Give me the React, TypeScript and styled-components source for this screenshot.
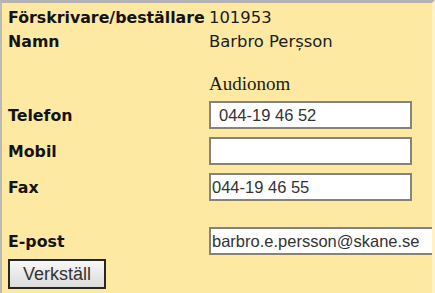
import React from "react";
import styled, { createGlobalStyle } from "styled-components";

const Global = createGlobalStyle`
  html, body { margin: 0; padding: 0; background: #fee9a3; }
  body { overflow: hidden; }
`;

const Panel = styled.div`
  box-sizing: border-box;
  width: 435px;
  height: 293px;
  overflow: hidden;
  background: #fee9a3;
  border-top: 3px solid #b3b2b6;
  border-left: 2px solid #bcbab4;
  border-right: 3px solid #fff2c4;
  padding-left: 6px;
  padding-top: 2px;
  display: flex;
  flex-direction: column;
`;

const Row = styled.div<{ $h: number }>`
  display: grid;
  grid-template-columns: 201px 1fr;
  align-items: center;
  height: ${(p) => p.$h}px;
  flex: none;
`;

const Spacer = styled.div<{ $h: number }>`
  height: ${(p) => p.$h}px;
  flex: none;
`;

const Label = styled.div`
  font-family: "DejaVu Sans", Verdana, sans-serif;
  font-weight: bold;
  font-size: 15.8px;
  color: #141414;
  white-space: nowrap;
`;

const Value = styled.div<{ $serif?: boolean }>`
  font-family: ${(p) =>
    p.$serif ? `"Liberation Serif", "Times New Roman", serif` : `"DejaVu Sans", Verdana, sans-serif`};
  font-size: ${(p) => (p.$serif ? 19 : 16.4)}px;
  color: #1c1c1c;
  white-space: nowrap;
`;

const Field = styled.input<{ $w: number; $indent?: number }>`
  box-sizing: border-box;
  width: ${(p) => p.$w}px;
  height: 28px;
  margin: 0;
  border: 2px solid #86847a;
  background: #fff;
  padding: 0 0 0 ${(p) => 1 + (p.$indent ?? 0)}px;
  font-family: "Liberation Sans", Arial, sans-serif;
  font-size: 16.5px;
  color: #333;
  outline: none;
`;

const ButtonRow = styled.div`
  display: flex;
  align-items: flex-start;
  flex: none;
`;

const Button = styled.button`
  box-sizing: border-box;
  width: 98px;
  height: 30px;
  margin: 0;
  border: 2px solid #262626;
  background: linear-gradient(#f7f7f7, #dcdcdc);
  font-family: "Liberation Sans", Arial, sans-serif;
  font-size: 18px;
  color: #333;
  padding: 0;
`;

export default function App() {
  return (
    <>
      <Global />
      <Panel>
        <Row $h={24}>
          <Label>Förskrivare/beställare</Label>
          <Value>101953</Value>
        </Row>
        <Row $h={24}>
          <Label>Namn</Label>
          <Value>Barbro Perșson</Value>
        </Row>
        <Spacer $h={18} />
        <Row $h={26}>
          <div />
          <Value $serif>Audionom</Value>
        </Row>
        <Row $h={36}>
          <Label>Telefon</Label>
          <Field $w={203} $indent={7} readOnly defaultValue="044-19 46 52" />
        </Row>
        <Row $h={36}>
          <Label>Mobil</Label>
          <Field $w={203} readOnly defaultValue="" />
        </Row>
        <Row $h={36}>
          <Label>Fax</Label>
          <Field $w={203} readOnly defaultValue="044-19 46 55" />
        </Row>
        <Spacer $h={18} />
        <Row $h={36}>
          <Label>E-post</Label>
          <Field $w={240} readOnly defaultValue="barbro.e.persson@skane.se" />
        </Row>
        <ButtonRow>
          <Button type="button">Verkställ</Button>
        </ButtonRow>
      </Panel>
    </>
  );
}
